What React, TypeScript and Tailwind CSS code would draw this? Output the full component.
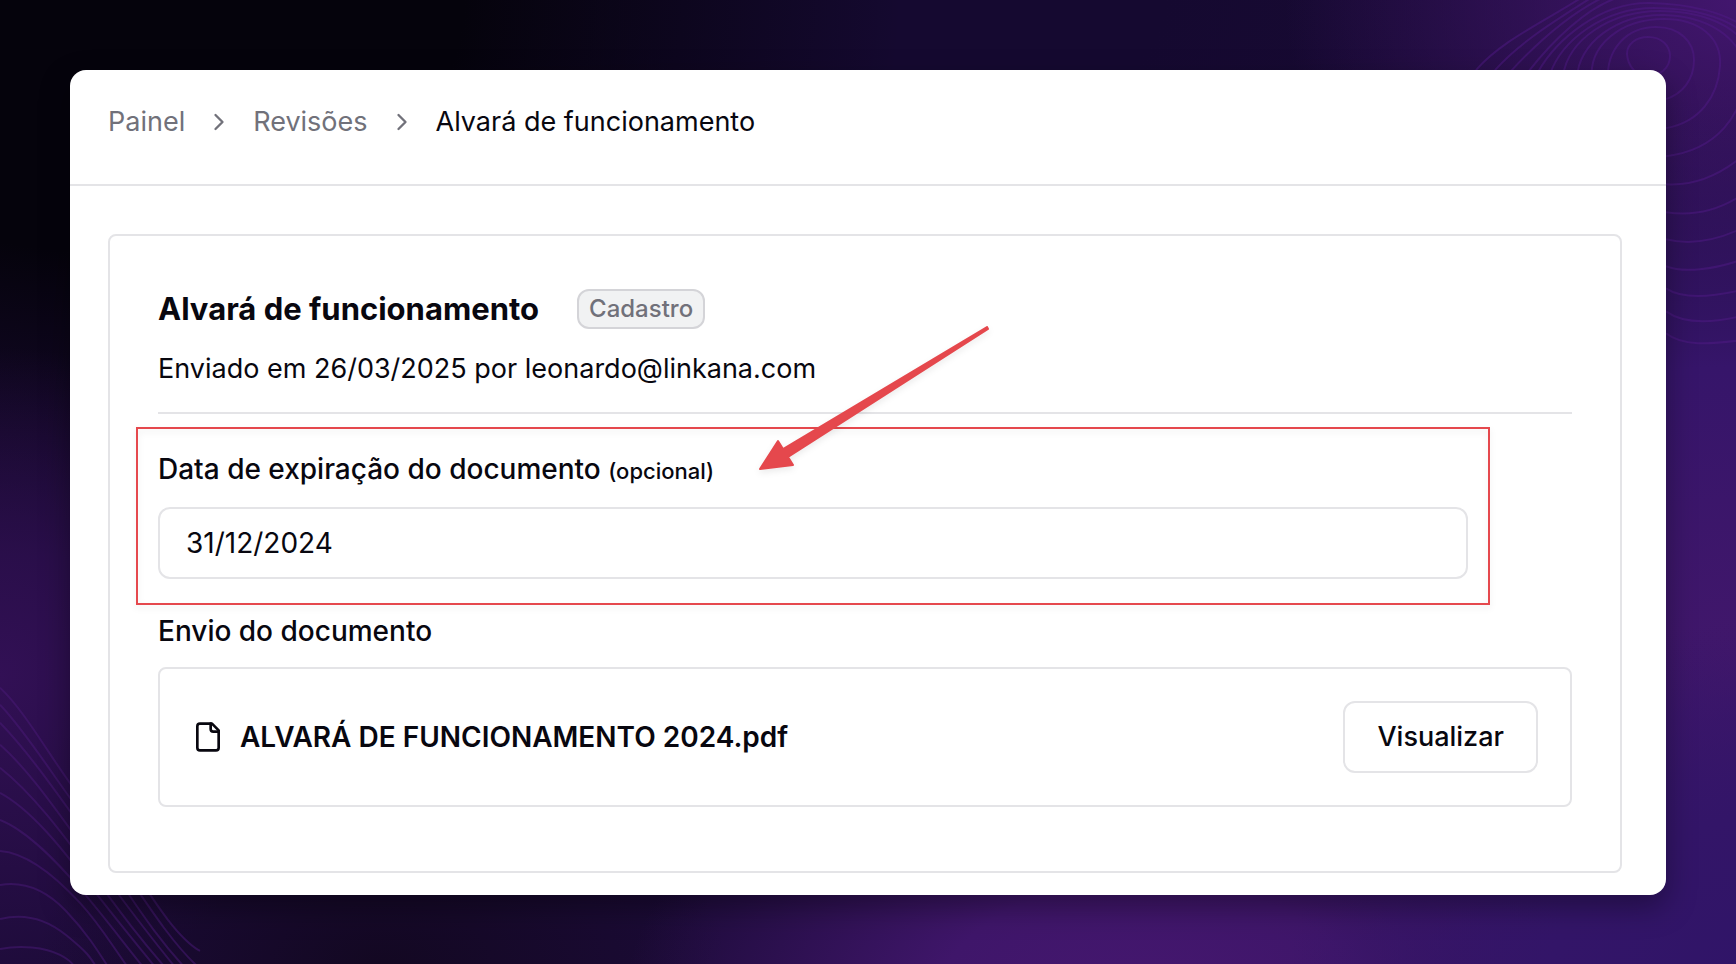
import React, { useState } from 'react';
import { ChevronRight } from 'lucide-react';

const leftWaves = [
  'M0 687 C30 715 60 775 95 815 S165 930 200 950',
  'M0 704 C30 735 62 790 95 830 S160 930 196 964',
  'M0 722 C32 755 62 800 95 845 S150 930 188 970',
  'M0 744 C32 772 62 818 92 858 S145 930 180 972',
  'M0 767 C32 792 62 832 90 870 S135 932 170 972',
  'M0 792 C30 808 60 845 85 878 S130 935 160 972',
  'M0 819 C28 830 58 862 82 890 S122 940 148 972',
  'M0 850 C28 852 58 878 80 902 S112 945 132 972',
  'M0 884 C24 880 45 888 66 910 S98 950 112 972',
  'M0 918 C24 912 45 917 66 934 S90 955 100 972',
  'M0 948 C20 944 45 946 60 954 S74 966 78 972',
];

const ringWaves = [
  'M1648 37 C1662 37 1670 46 1670 56 C1670 68 1660 76 1648 76 C1636 76 1628 66 1627 54 C1627 44 1636 37 1648 37 Z',
  'M1608 80 C1606 50 1626 27 1656 27 C1680 27 1694 42 1694 60 C1694 80 1682 94 1666 99',
  'M1592 80 C1588 46 1620 19 1664 19 C1700 19 1722 38 1720 66 C1718 96 1700 122 1666 128',
  'M1577 78 C1578 44 1616 14 1664 15 C1706 16 1740 36 1746 70 C1744 116 1716 150 1666 156',
  'M1563 76 C1568 40 1610 11 1660 11 C1700 11 1728 24 1740 38',
  'M1550 74 C1562 40 1604 8 1654 8 C1694 8 1724 18 1740 30',
  'M1538 72 C1556 40 1600 2 1650 3 C1694 4 1724 14 1740 24',
  'M1528 72 C1550 44 1588 4 1624 -4',
  'M1510 72 C1534 46 1568 14 1606 -4',
  'M1495 70 C1520 42 1556 20 1594 -4',
  'M1476 70 C1502 40 1544 22 1584 -4',
  'M1666 184 C1696 186 1720 174 1740 158',
  'M1666 212 C1692 216 1718 210 1740 196',
  'M1666 239 C1690 245 1716 240 1740 229',
  'M1666 266 C1684 273 1714 269 1740 260',
  'M1666 288 C1684 300 1714 296 1740 290',
  'M1666 311 C1684 324 1714 322 1740 316',
  'M1666 333 C1682 346 1710 344 1740 340',
];

const crumbs = ['Painel', 'Revisões'];

function Backdrop() {
  return (
    <div className="absolute inset-0 bg-[#1c0b38]">
      <div className="absolute inset-0 bg-[radial-gradient(ellipse_50%_50%_at_52%_0%,#150930_0%,#150930_30%,transparent_100%)]" />
      <div className="absolute inset-0 bg-[radial-gradient(ellipse_46%_58%_at_6%_0%,#05030c_0%,#05030c_45%,transparent_100%)]" />
      <div className="absolute inset-0 bg-[radial-gradient(ellipse_26%_36%_at_100%_0%,#42166e_0%,transparent_100%)]" />
      <div className="absolute inset-0 bg-[radial-gradient(ellipse_40%_60%_at_100%_68%,#41176b_0%,#36156a_50%,transparent_100%)]" />
      <div className="absolute inset-0 bg-[radial-gradient(ellipse_18%_34%_at_0%_70%,#321055_0%,transparent_100%)]" />
      <div className="absolute inset-0 bg-[radial-gradient(ellipse_20%_20%_at_22%_100%,#130822_0%,transparent_100%)]" />
      <div className="absolute inset-0 bg-[radial-gradient(ellipse_30%_32%_at_66%_104%,#45176f_0%,#3f166a_40%,transparent_100%)]" />
      <div className="absolute inset-0 bg-[radial-gradient(ellipse_30%_40%_at_104%_104%,#2f1468_0%,#331568_50%,transparent_100%)]" />
      <svg
        className="absolute inset-0 w-full h-full"
        viewBox="0 0 1736 964"
        preserveAspectRatio="none"
        fill="none"
        strokeWidth="2"
        aria-hidden="true"
      >
        <g stroke="#4a1a78" strokeOpacity="0.5">
          {leftWaves.map((d) => (
            <path key={d} d={d} />
          ))}
        </g>
        <g stroke="#4f1a86" strokeOpacity="0.5">
          {ringWaves.map((d) => (
            <path key={d} d={d} />
          ))}
        </g>
      </svg>
    </div>
  );
}

function FileIcon() {
  return (
    <svg
      className="w-8 h-8"
      viewBox="0 0 24 24"
      fill="none"
      stroke="currentColor"
      strokeWidth="2"
      strokeLinecap="round"
      strokeLinejoin="round"
      aria-hidden="true"
    >
      <path d="M15 2H6a2 2 0 0 0-2 2v16a2 2 0 0 0 2 2h12a2 2 0 0 0 2-2V7Z" />
      <path d="M14 2v4a2 2 0 0 0 2 2h4" />
    </svg>
  );
}

function Arrow() {
  return (
    <svg
      className="absolute left-[598px] -top-[129px] w-[240px] h-[156px] pointer-events-none drop-shadow-[0_3px_3px_rgba(0,0,0,0.08)]"
      viewBox="756 320 240 156"
      fill="#e5484d"
      stroke="#e5484d"
      strokeWidth="2"
      strokeLinejoin="round"
      aria-hidden="true"
    >
      <path d="M760 469 L778 441 L783 449 L987 327 L988 329 L788 457 L793 465 Z" />
    </svg>
  );
}

export default function App() {
  const [date, setDate] = useState('31/12/2024');

  return (
    <div className="relative min-h-screen p-[70px] font-['Inter',sans-serif] text-[27px] leading-10 text-[#08070f]">
      <Backdrop />

      <main className="relative bg-white rounded-2xl shadow-[0_12px_30px_rgba(0,0,0,0.35)]">
        {/* Breadcrumb */}
        <nav aria-label="Breadcrumb" className="border-b-2 border-[#e4e4e7] px-[38px] pt-8 pb-[42px]">
          <ol className="flex items-center">
            {crumbs.map((crumb) => (
              <li key={crumb} className="flex items-center text-[#71717a]">
                <a href="#">{crumb}</a>
                <ChevronRight className="w-7 h-7 mx-5" strokeWidth={2} />
              </li>
            ))}
            <li aria-current="page">Alvará de funcionamento</li>
          </ol>
        </nav>

        <div className="px-[38px] pt-12 pb-[22px] mr-1.5">
          <section className="border-2 border-[#e4e4e7] rounded-lg px-12 pt-[49px] pb-16">
            {/* Header */}
            <header className="border-b-2 border-[#e4e4e7] pb-[23px]">
              <div className="flex items-center gap-[38px] mb-4">
                <h1 className="text-[31px] leading-[48px] font-bold">Alvará de funcionamento</h1>
                <span className="border-2 border-[#d4d4d8] bg-[#f1f2f3] rounded-xl px-2.5 text-2xl leading-9 font-medium text-[#71717a]">
                  Cadastro
                </span>
              </div>
              <p>Enviado em 26/03/2025 por leonardo@linkana.com</p>
            </header>

            {/* Expiration date */}
            <div className="relative mt-[35px] mr-[104px]">
              <label htmlFor="expiration" className="block text-[28px] font-medium">
                Data de expiração do documento <span className="text-[22px] leading-none">(opcional)</span>
              </label>
              <input
                id="expiration"
                type="text"
                value={date}
                onChange={(e) => setDate(e.target.value)}
                className="block w-full h-[72px] mt-[18px] px-[26px] border-2 border-[#e4e4e7] rounded-xl text-[28px]"
              />
              <div className="absolute -inset-x-[22px] -top-[22px] -bottom-[26px] border-2 border-[#e5484d] pointer-events-none drop-shadow-[0_3px_3px_rgba(0,0,0,0.08)]" />
              <Arrow />
            </div>

            {/* Document */}
            <h2 className="mt-8 mb-4 text-[28px] font-medium">Envio do documento</h2>
            <div className="flex items-center justify-between border-2 border-[#e4e4e7] rounded-lg p-8">
              <div className="flex items-center gap-4">
                <FileIcon />
                <span className="text-[28px] font-semibold">ALVARÁ DE FUNCIONAMENTO 2024.pdf</span>
              </div>
              <button type="button" className="border-2 border-[#e4e4e7] rounded-xl px-8 py-3.5 font-medium">
                Visualizar
              </button>
            </div>
          </section>
        </div>
      </main>
    </div>
  );
}
